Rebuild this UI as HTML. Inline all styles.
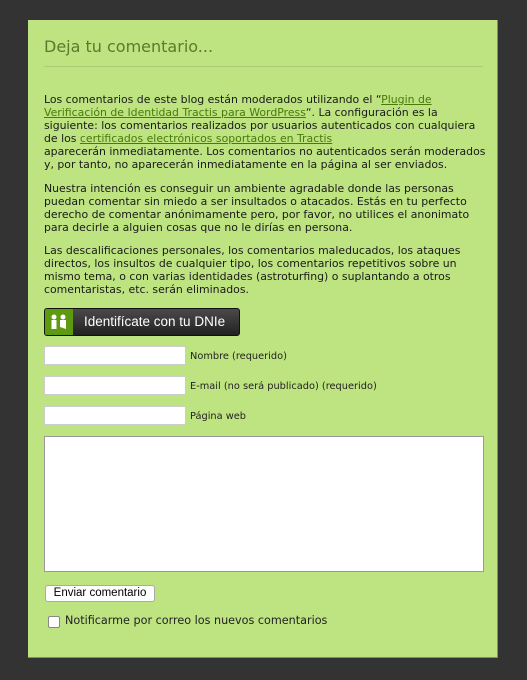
<!DOCTYPE html>
<html><head><meta charset="utf-8"><style>
body{margin:0;background:#333333;width:527px;height:680px;position:relative;overflow:hidden;font-family:"DejaVu Sans","Liberation Sans",sans-serif;}
#p{position:absolute;left:28px;top:20px;width:469px;height:637px;background:#bee381;border-right:1px solid #7a9a45;border-bottom:1px solid #7a9a45;}
h2{position:absolute;left:16px;top:17px;margin:0;font-size:16px;font-weight:normal;color:#5b7a2c;}
.hr{position:absolute;left:16px;top:46px;width:439px;height:1px;background:#a9cc75;}
.t{position:absolute;left:16px;white-space:nowrap;font-size:10.9px;line-height:13px;color:#1a1a1a;margin:0;}
a{color:#4a7a0a;text-decoration:underline;}
.btn{position:absolute;left:16px;top:288px;width:194px;height:26px;border-radius:3px;background:linear-gradient(#4a4a4a,#222);border:1px solid #111;overflow:hidden;}
.btn .g{position:absolute;left:0;top:0;width:28px;height:26px;background:#5e9a10;}
.btn span{position:absolute;left:39px;top:5px;color:#fff;font-size:13.5px;font-family:"Liberation Sans",sans-serif;}
.in{position:absolute;left:16px;width:140px;height:17px;background:#fff;border:1px solid #ccc;}
.l{position:absolute;left:162px;font-size:9.8px;color:#222;}
.ta{position:absolute;left:16px;top:416px;width:438px;height:134px;background:#fff;border:1px solid #999;}
.sb{position:absolute;left:17px;top:565px;width:108px;height:15px;background:#fff;border:1px solid #aaa;border-radius:3px;font-family:"Liberation Sans",sans-serif;font-size:11.5px;text-align:center;line-height:15px;color:#000;}
.cb{position:absolute;left:20px;top:596px;width:10px;height:10px;background:#fff;border:1px solid #888;border-radius:2px;}
.ct{position:absolute;left:37px;top:594px;font-size:11.2px;color:#222;}
</style></head><body>
<div id="p">
<h2>Deja tu comentario...</h2>
<div class="hr"></div>
<p class="t" style="top:73px">Los comentarios de este blog están moderados utilizando el “<a>Plugin de</a><br><a>Verificación de Identidad Tractis para WordPress</a>“. La configuración es la<br>siguiente: los comentarios realizados por usuarios autenticados con cualquiera<br>de los <a>certificados electrónicos soportados en Tractis</a><br>aparecerán inmediatamente. Los comentarios no autenticados serán moderados<br>y, por tanto, no aparecerán inmediatamente en la página al ser enviados.</p>
<p class="t" style="top:162px">Nuestra intención es conseguir un ambiente agradable donde las personas<br>puedan comentar sin miedo a ser insultados o atacados. Estás en tu perfecto<br>derecho de comentar anónimamente pero, por favor, no utilices el anonimato<br>para decirle a alguien cosas que no le dirías en persona.</p>
<p class="t" style="top:224px">Las descalificaciones personales, los comentarios maleducados, los ataques<br>directos, los insultos de cualquier tipo, los comentarios repetitivos sobre un<br>mismo tema, o con varias identidades (astroturfing) o suplantando a otros<br>comentaristas, etc. serán eliminados.</p>
<div class="btn"><div class="g"><svg width="28" height="26"><circle cx="9" cy="8" r="2.5" fill="#fff"/><rect x="6.5" y="11" width="5" height="9" fill="#fff"/><circle cx="18" cy="8" r="2.5" fill="#fff"/><path d="M15 11h6v9l-6-2z" fill="#fff"/></svg></div><span>Identifícate con tu DNIe</span></div>
<div class="in" style="top:326px"></div><div class="l" style="top:331px">Nombre (requerido)</div>
<div class="in" style="top:356px"></div><div class="l" style="top:361px">E-mail (no será publicado) (requerido)</div>
<div class="in" style="top:386px"></div><div class="l" style="top:391px">Página web</div>
<div class="ta"></div>
<div class="sb">Enviar comentario</div>
<div class="cb"></div><div class="ct">Notificarme por correo los nuevos comentarios</div>
</div>
</body></html>
